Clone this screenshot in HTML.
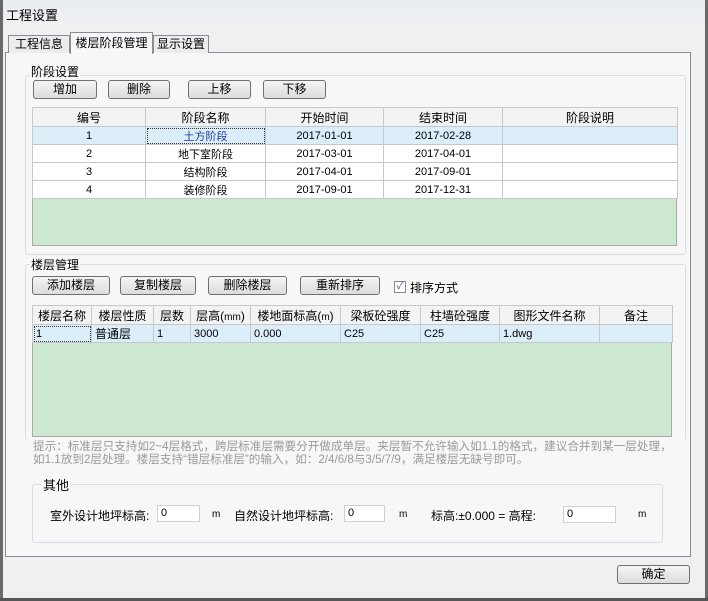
<!DOCTYPE html>
<html><head><meta charset="utf-8"><style>
*{box-sizing:border-box;margin:0;padding:0}
body{width:708px;height:601px;overflow:hidden;background:#f0f0f0;font-family:"Liberation Sans","Noto Sans CJK SC",sans-serif;font-size:12px;color:#000;position:relative}
.a{position:absolute}
.btn{position:absolute;height:19px;border:1px solid #707070;border-radius:3px;background:linear-gradient(#f4f4f4,#dcdcdc);text-align:center;line-height:17px;font-size:12px}
.grp{position:absolute;border:1px solid #d5dfe5;border-radius:3px}
table{position:absolute;border-collapse:collapse;table-layout:fixed;font-size:11px}
td,th{border:1px solid #c8c8c8;height:18px;padding:0 3px;font-weight:normal;white-space:nowrap;overflow:hidden}
th{background:#f3f3f3;text-align:center;font-size:12px}
.green{position:absolute;background:#cde8d0;border:1px solid #aaa;border-top:none}
.inp{position:absolute;height:17px;background:#fff;border:1px solid #d0d0d0;padding-left:3px;line-height:15px;font-size:11px}
.lb{position:absolute;font-size:12px;top:507px}
</style></head><body>
<div class="a" style="left:0;top:0;width:708px;height:28px;background:linear-gradient(#e9edf2,#f0f0f0)"></div>
<div class="a" style="left:6px;top:5px;font-size:13px">工程设置</div>
<div class="a" style="left:0;top:0;width:3px;height:601px;background:#6a6a6a"></div>
<div class="a" style="left:705px;top:0;width:3px;height:601px;background:#6a6a6a"></div>
<div class="a" style="left:0;top:598px;width:708px;height:3px;background:#555"></div>
<div class="a" style="left:5px;top:52px;width:686px;height:505px;border:1px solid #898c95;background:#f7f7f7"></div>
<div class="a" style="left:8px;top:35px;width:62px;height:18px;border:1px solid #898c95;border-bottom:none;background:#ececec;text-align:center;line-height:17px">工程信息</div>
<div class="a" style="left:70px;top:32px;width:83px;height:22px;border:1px solid #898c95;border-bottom:none;background:#f7f7f7;text-align:center;line-height:20px">楼层阶段管理</div>
<div class="a" style="left:153px;top:35px;width:56px;height:18px;border:1px solid #898c95;border-bottom:none;background:#ececec;text-align:center;line-height:17px">显示设置</div>
<div class="grp" style="left:25px;top:75px;width:661px;height:180px"></div>
<div class="a" style="left:30px;top:63px;background:#f7f7f7;padding:0 1px">阶段设置</div>
<div class="btn" style="left:33px;top:80px;width:64px">增加</div>
<div class="btn" style="left:108px;top:80px;width:62px">删除</div>
<div class="btn" style="left:188px;top:80px;width:63px">上移</div>
<div class="btn" style="left:263px;top:80px;width:63px">下移</div>
<table style="left:32px;top:107px;width:645px;background:#fff">
<colgroup><col style="width:113px"><col style="width:120px"><col style="width:118px"><col style="width:119px"><col style="width:175px"></colgroup>
<tr><th style="height:19px">编号</th><th>阶段名称</th><th>开始时间</th><th>结束时间</th><th>阶段说明</th></tr>
<tr style="background:#dceefa;text-align:center"><td>1</td><td style="outline:1px dotted #333;outline-offset:-2px;color:#1a3a9a">土方阶段</td><td>2017-01-01</td><td>2017-02-28</td><td></td></tr>
<tr style="text-align:center"><td>2</td><td>地下室阶段</td><td>2017-03-01</td><td>2017-04-01</td><td></td></tr>
<tr style="text-align:center"><td>3</td><td>结构阶段</td><td>2017-04-01</td><td>2017-09-01</td><td></td></tr>
<tr style="text-align:center"><td>4</td><td>装修阶段</td><td>2017-09-01</td><td>2017-12-31</td><td></td></tr>
</table>
<div class="green" style="left:32px;top:199px;width:645px;height:47px"></div>
<div class="grp" style="left:25px;top:264px;width:661px;height:176px;border-bottom:none"></div>
<div class="a" style="left:30px;top:256px;background:#f7f7f7;padding:0 1px">楼层管理</div>
<div class="btn" style="left:32px;top:276px;width:78px">添加楼层</div>
<div class="btn" style="left:120px;top:276px;width:76px">复制楼层</div>
<div class="btn" style="left:208px;top:276px;width:79px">删除楼层</div>
<div class="btn" style="left:300px;top:276px;width:80px">重新排序</div>
<div class="a" style="left:394px;top:281px;width:12px;height:12px;border:1px solid #8a8a8a;background:#fff;font-size:10px;line-height:10px;text-align:center;color:#2a5bb0">✓</div>
<div class="a" style="left:410px;top:279px">排序方式</div>
<table style="left:32px;top:305px;width:640px;background:#fff">
<colgroup><col style="width:59px"><col style="width:62px"><col style="width:37px"><col style="width:60px"><col style="width:90px"><col style="width:80px"><col style="width:79px"><col style="width:100px"><col style="width:73px"></colgroup>
<tr><th style="height:19px">楼层名称</th><th>楼层性质</th><th>层数</th><th>层高(<small>mm</small>)</th><th>楼地面标高(<small>m</small>)</th><th>梁板砼强度</th><th>柱墙砼强度</th><th>图形文件名称</th><th>备注</th></tr>
<tr style="background:#dceefa"><td style="outline:1px dotted #333;outline-offset:-2px">1</td><td style="font-size:12px">普通层</td><td>1</td><td>3000</td><td>0.000</td><td>C25</td><td>C25</td><td>1.dwg</td><td></td></tr>
</table>
<div class="green" style="left:32px;top:343px;width:640px;height:94px"></div>
<div class="a" style="left:33px;top:440px;width:640px;font-size:11.6px;line-height:13px;color:#9a9a9a">提示：标准层只支持如2~4层格式，跨层标准层需要分开做成单层。夹层暂不允许输入如1.1的格式，建议合并到某一层处理，如1.1放到2层处理。楼层支持“错层标准层”的输入，如：2/4/6/8与3/5/7/9，满足楼层无缺号即可。</div>
<div class="grp" style="left:32px;top:484px;width:631px;height:59px"></div>
<div class="a" style="left:41px;top:475px;background:#f7f7f7;padding:0 2px;font-size:13px">其他</div>
<div class="lb" style="left:50px">室外设计地坪标高:</div>
<div class="inp" style="left:157px;top:505px;width:43px">0</div>
<div class="a" style="left:212px;top:509px;font-size:10px">m</div>
<div class="lb" style="left:234px">自然设计地坪标高:</div>
<div class="inp" style="left:344px;top:505px;width:41px">0</div>
<div class="a" style="left:399px;top:509px;font-size:10px">m</div>
<div class="lb" style="left:431px">标高:±0.000 = 高程:</div>
<div class="inp" style="left:563px;top:506px;width:53px">0</div>
<div class="a" style="left:638px;top:509px;font-size:10px">m</div>
<div class="btn" style="left:617px;top:565px;width:73px">确定</div>
</body></html>
